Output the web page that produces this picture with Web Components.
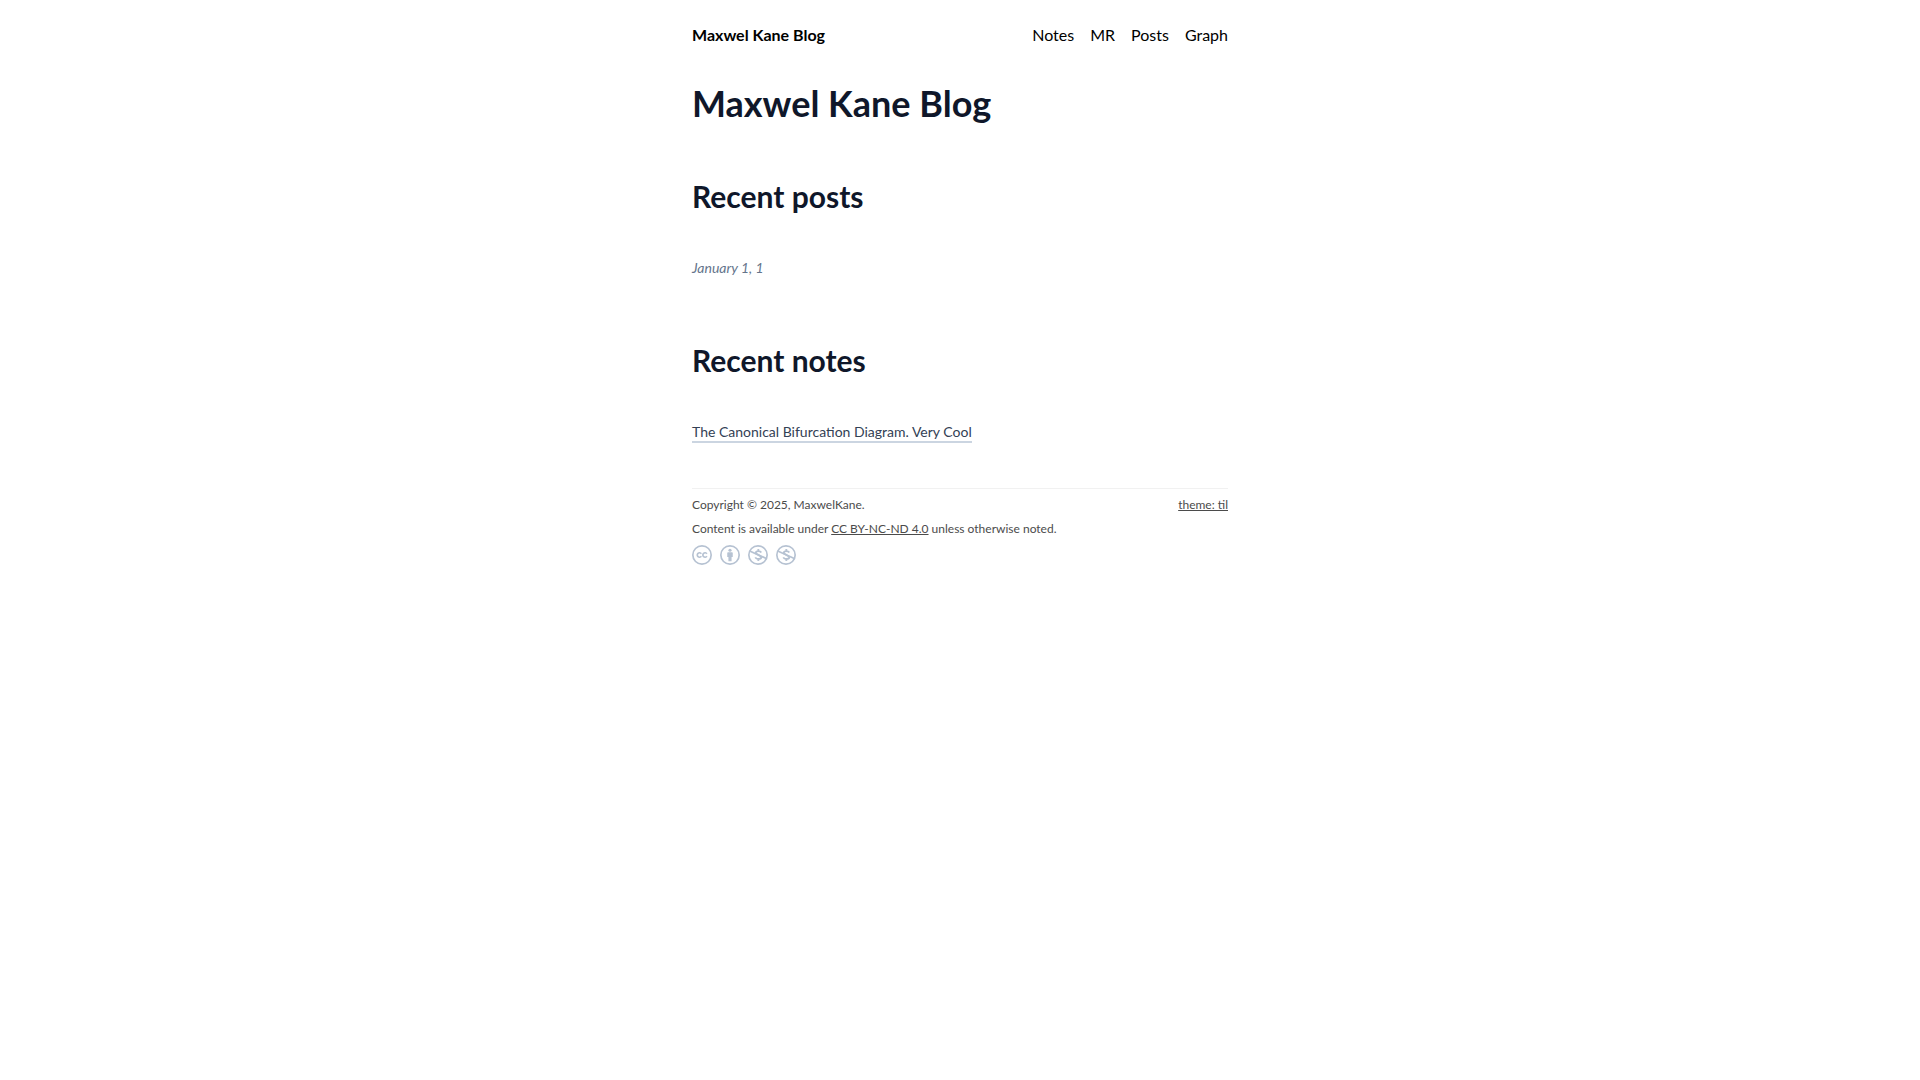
<!DOCTYPE html>
<html lang="en">
<head>
<meta charset="utf-8">
<meta name="viewport" content="width=device-width, initial-scale=1">
<title>Maxwel Kane Blog</title>
<style>
    body {
        margin: 0;
        background: #fff;
        color: #000;
        font: 16px/24px Lato, sans-serif;
    }
</style>
</head>
<body>
<blog-page>
    <site-header slot="header" name="Maxwel Kane Blog">
        <a href="#notes">Notes</a>
        <a href="#mr">MR</a>
        <a href="#posts">Posts</a>
        <a href="#graph">Graph</a>
    </site-header>

    <recent-list heading="Recent posts">
        <post-entry date="January 1, 1"></post-entry>
    </recent-list>
    <recent-list heading="Recent notes">
        <post-entry href="#bifurcation">The Canonical Bifurcation Diagram. Very Cool</post-entry>
    </recent-list>

    <site-footer slot="footer"></site-footer>
</blog-page>

<script>
class BlogPage extends HTMLElement {
    constructor() {
        super();
        this.attachShadow({ mode: 'open' });
        this.shadowRoot.innerHTML = `
            <style>
                :host {
                    display: block;
                    box-sizing: border-box;
                    max-width: 568px;
                    margin: 0 auto;
                    padding: 23px 16px;
                }
                h1 {
                    margin: 36px 0 0;
                    color: #0f172a;
                    font-size: 36px;
                    line-height: 40px;
                    font-weight: 700;
                }
            </style>
            <slot name="header"></slot>
            <main>
                <h1>Maxwel Kane Blog</h1>
                <slot></slot>
            </main>
            <slot name="footer"></slot>
        `;
    }
}

class SiteHeader extends HTMLElement {
    constructor() {
        super();
        this.attachShadow({ mode: 'open' });
        this.shadowRoot.innerHTML = `
            <style>
                :host { display: block; }
                header {
                    display: flex;
                    justify-content: space-between;
                }
                nav {
                    display: flex;
                    gap: 16px;
                }
                .name { font-weight: 700; }
                .name, ::slotted(a) {
                    color: #000;
                    text-decoration: none;
                }
            </style>
            <header>
                <a class="name" href="#"></a>
                <nav><slot></slot></nav>
            </header>
        `;
    }

    connectedCallback() {
        this.shadowRoot.querySelector('.name').textContent = this.getAttribute('name');
    }
}

class RecentList extends HTMLElement {
    constructor() {
        super();
        this.attachShadow({ mode: 'open' });
        this.shadowRoot.innerHTML = `
            <style>
                :host {
                    display: block;
                    padding-top: 55px;
                }
                h2 {
                    margin: 0 0 44px;
                    color: #0f172a;
                    font-size: 30px;
                    line-height: 36px;
                    font-weight: 700;
                }
            </style>
            <section>
                <h2></h2>
                <slot></slot>
            </section>
        `;
    }

    connectedCallback() {
        this.shadowRoot.querySelector('h2').textContent = this.getAttribute('heading');
    }
}

// An entry shows its title as a link, its date, or both
class PostEntry extends HTMLElement {
    constructor() {
        super();
        this.attachShadow({ mode: 'open' });
        this.shadowRoot.innerHTML = `
            <style>
                :host {
                    display: block;
                    padding-bottom: 9px;
                    font-size: 14px;
                    line-height: 20px;
                }
                a {
                    padding-bottom: 1px;
                    border-bottom: 2px solid #cbd5e1;
                    color: #334155;
                    text-decoration: none;
                }
                time {
                    color: #64748b;
                    font-style: italic;
                }
            </style>
        `;
    }

    connectedCallback() {
        if (this.hasAttribute('href')) {
            const link = document.createElement('a');
            link.href = this.getAttribute('href');
            link.appendChild(document.createElement('slot'));
            this.shadowRoot.appendChild(link);
        }
        if (this.hasAttribute('date')) {
            const time = document.createElement('time');
            time.textContent = this.getAttribute('date');
            this.shadowRoot.appendChild(time);
        }
    }
}

const ICONS = {
    cc: `<path d="M11.2 10.4a2.7 2.7 0 1 0 0 3.2M17.9 10.4a2.7 2.7 0 1 0 0 3.2" stroke-width="2"/>`,
    by: `<circle cx="12" cy="6.3" r="1.9" fill="currentColor" stroke="none"/>
         <path d="M9.6 8.8h4.8q.9 0 .9.9v4.7h-1.4v5h-3.8v-5H8.7V9.7q0-.9.9-.9z" fill="currentColor" stroke="none"/>`,
    nc: `<path d="M2 7.2l20 9" stroke-width="2.2"/>
         <path d="M12.4 4.8v2.4m0 9.6v2.4M16 9C15.2 7.8 13.8 7.3 12.4 7.3c-1.8 0-3 .8-3 2.1 0 1.5 1.5 2 3.2 2.6 1.9.7 3.3 1.2 3.3 2.7S14.4 16.8 12.6 16.8c-1.8 0-3.2-.7-3.9-2" stroke-width="2.2"/>`
};

class LicenseIcon extends HTMLElement {
    constructor() {
        super();
        this.attachShadow({ mode: 'open' });
    }

    connectedCallback() {
        this.shadowRoot.innerHTML = `
            <style>
                :host {
                    display: block;
                    color: #b6c2d2;
                }
                svg {
                    display: block;
                    width: 20px;
                    height: 20px;
                }
            </style>
            <svg viewBox="0 0 24 24" fill="none" stroke="currentColor" aria-hidden="true">
                <circle cx="12" cy="12" r="11" stroke-width="2"/>
                ${ICONS[this.getAttribute('type')]}
            </svg>
        `;
    }
}

class SiteFooter extends HTMLElement {
    constructor() {
        super();
        this.attachShadow({ mode: 'open' });
        this.shadowRoot.innerHTML = `
            <style>
                :host {
                    display: block;
                    margin-top: 37px;
                    color: #4b4b4b;
                    font-size: 12px;
                    line-height: 16px;
                }
                footer {
                    display: grid;
                    gap: 8px;
                    padding-top: 8px;
                    border-top: 1px solid #f1f1f1;
                }
                .row {
                    display: flex;
                    justify-content: space-between;
                }
                .icons {
                    display: flex;
                    gap: 8px;
                }
                p { margin: 0; }
                a { color: inherit; }
            </style>
            <footer>
                <div class="row">
                    <p>Copyright © 2025, MaxwelKane.</p>
                    <a href="#theme">theme: til</a>
                </div>
                <p>Content is available under <a href="#license">CC BY-NC-ND 4.0</a> unless otherwise noted.</p>
                <div class="icons">
                    <license-icon type="cc"></license-icon>
                    <license-icon type="by"></license-icon>
                    <license-icon type="nc"></license-icon>
                    <license-icon type="nc"></license-icon>
                </div>
            </footer>
        `;
    }
}

customElements.define('blog-page', BlogPage);
customElements.define('site-header', SiteHeader);
customElements.define('recent-list', RecentList);
customElements.define('post-entry', PostEntry);
customElements.define('license-icon', LicenseIcon);
customElements.define('site-footer', SiteFooter);
</script>
</body>
</html>
